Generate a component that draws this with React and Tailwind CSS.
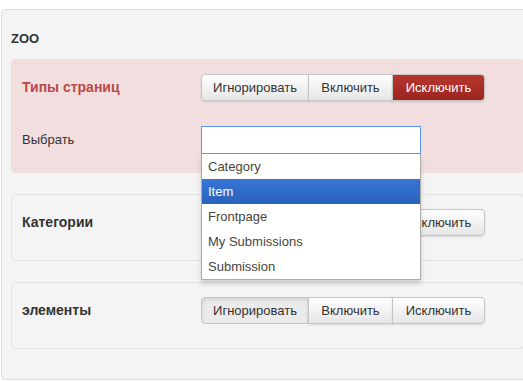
import { useState } from 'react';

const OPTIONS = ['Category', 'Item', 'Frontpage', 'My Submissions', 'Submission'];

const btnBase = 'h-[27px] border border-[#c5c5c5] text-[13px] flex items-center justify-center';
const btnLight = 'bg-gradient-to-b from-white to-[#e6e6e6] text-[#333] shadow-[inset_0_1px_0_rgba(255,255,255,0.4),0_1px_2px_rgba(0,0,0,0.1)]';

const Toggle = ({ value }) => {
    const items = [
        { key: 'ignore', label: 'Игнорировать', w: 'w-[108px]' },
        { key: 'on', label: 'Включить', w: 'w-[85px]' },
        { key: 'off', label: 'Исключить', w: 'w-[93px]' },
    ];
    return (
        <div className="flex">
            {items.map((it, i) => {
                const round = i === 0 ? 'rounded-l-[4px]' : i === 2 ? 'rounded-r-[4px] -ml-px' : '-ml-px';
                let look = btnLight;
                if (value === it.key && it.key === 'off') {
                    look = 'bg-gradient-to-b from-[#b7362f] to-[#9b2420] text-white border-[#8c1f1b] shadow-[0_1px_2px_rgba(0,0,0,0.15)]';
                } else if (value === it.key) {
                    look = 'bg-[#ebebeb] text-[#333] shadow-[inset_0_2px_4px_rgba(0,0,0,0.1)]';
                }
                return (
                    <button key={it.key} className={`${btnBase} ${it.w} ${round} ${look}`}>{it.label}</button>
                );
            })}
        </div>
    );
};

export default function App() {
    const [active] = useState('Item');

    return (
        <div className="w-[523px] h-[381px] overflow-hidden bg-white pt-[9px] pl-px" style={{ fontFamily: '"Liberation Sans", Arial, sans-serif' }}>
            <div className="w-[540px] h-[371px] bg-[#f4f4f4] border border-[#dedede] rounded-[4px] pl-[9px] pr-4">
                <h3 className="text-[13px] font-bold text-[#333] leading-none pt-[22px] pb-[14px]">ZOO</h3>

                {/* Типы страниц */}
                <div className="bg-[#f2dede] rounded-[4px] pl-[11px] pt-[15px] pb-[19px]">
                    <div className="flex items-center">
                        <div className="w-[179px] text-[14px] font-bold text-[#b94a48]">Типы страниц</div>
                        <Toggle value="off" />
                    </div>
                    <div className="flex items-center mt-[25px]">
                        <div className="w-[179px] text-[13px] text-[#333]">Выбрать</div>
                        <div className="relative w-[220px]">
                            <div className="h-[28px] bg-white border border-[#5897fb]"></div>
                            <ul className="absolute left-0 top-[28px] w-[220px] bg-white border border-[#aaa] border-t-0 shadow-[0_4px_5px_rgba(0,0,0,0.15)] z-10">
                                {OPTIONS.map(o => (
                                    <li key={o} className={`h-[25px] pl-[6px] flex items-center text-[13px] ${o === active ? 'bg-gradient-to-b from-[#3875d7] to-[#2a62bc] text-white' : 'text-[#444]'}`}>{o}</li>
                                ))}
                            </ul>
                        </div>
                    </div>
                </div>

                {/* Категории */}
                <div className="mt-[21px] h-[67px] border border-[#e3e3e3] rounded-[4px] pl-[10px] pt-[14px]">
                    <div className="flex items-center">
                        <div className="w-[179px] text-[14px] font-bold text-[#333]">Категории</div>
                        <Toggle value="" />
                    </div>
                </div>

                {/* элементы */}
                <div className="mt-[21px] h-[67px] border border-[#e3e3e3] rounded-[4px] pl-[10px] pt-[14px]">
                    <div className="flex items-center">
                        <div className="w-[179px] text-[14px] font-bold text-[#333]">элементы</div>
                        <Toggle value="ignore" />
                    </div>
                </div>
            </div>
        </div>
    );
}
